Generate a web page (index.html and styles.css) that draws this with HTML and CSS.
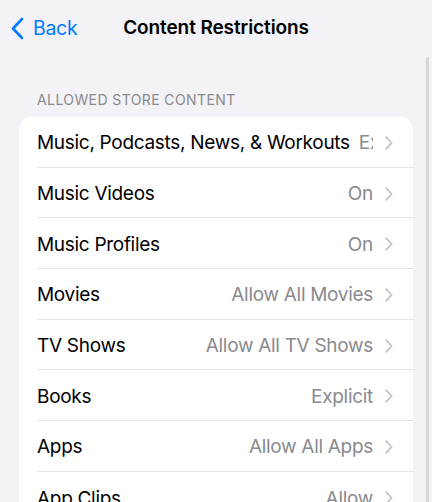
FILE: index.html
```html
<!DOCTYPE html>
<html lang="en">
<head>
<meta charset="utf-8">
<title>Content Restrictions</title>
<link rel="stylesheet" href="styles.css">
</head>
<body>
<div class="screen">
  <header class="nav">
    <a class="back" href="#">
      <svg class="back-icon" width="14" height="23" viewBox="0 0 14 23" aria-hidden="true">
        <path d="M12 2 L3 11.5 L12 21" fill="none" stroke="#007aff" stroke-width="2.6" stroke-linecap="round" stroke-linejoin="round"/>
      </svg>
      <span>Back</span>
    </a>
    <h1 class="title">Content Restrictions</h1>
    <div class="nav-spacer"></div>
  </header>

  <section class="group">
    <h2 class="group-header">ALLOWED STORE CONTENT</h2>
    <ul class="card">
      <li class="row"><div class="row-inner"><span class="label">Music, Podcasts, News, &amp; Workouts</span><span class="value">Explicit</span><svg class="chev" width="8" height="14" viewBox="0 0 8 14"><path d="M1.2 1.2 L6.6 7 L1.2 12.8" fill="none" stroke="#c4c4c7" stroke-width="1.8" stroke-linecap="round" stroke-linejoin="round"/></svg></div></li>
      <li class="row"><div class="row-inner"><span class="label">Music Videos</span><span class="value">On</span><svg class="chev" width="8" height="14" viewBox="0 0 8 14"><path d="M1.2 1.2 L6.6 7 L1.2 12.8" fill="none" stroke="#c4c4c7" stroke-width="1.8" stroke-linecap="round" stroke-linejoin="round"/></svg></div></li>
      <li class="row"><div class="row-inner"><span class="label">Music Profiles</span><span class="value">On</span><svg class="chev" width="8" height="14" viewBox="0 0 8 14"><path d="M1.2 1.2 L6.6 7 L1.2 12.8" fill="none" stroke="#c4c4c7" stroke-width="1.8" stroke-linecap="round" stroke-linejoin="round"/></svg></div></li>
      <li class="row"><div class="row-inner"><span class="label">Movies</span><span class="value">Allow All Movies</span><svg class="chev" width="8" height="14" viewBox="0 0 8 14"><path d="M1.2 1.2 L6.6 7 L1.2 12.8" fill="none" stroke="#c4c4c7" stroke-width="1.8" stroke-linecap="round" stroke-linejoin="round"/></svg></div></li>
      <li class="row"><div class="row-inner"><span class="label">TV Shows</span><span class="value">Allow All TV Shows</span><svg class="chev" width="8" height="14" viewBox="0 0 8 14"><path d="M1.2 1.2 L6.6 7 L1.2 12.8" fill="none" stroke="#c4c4c7" stroke-width="1.8" stroke-linecap="round" stroke-linejoin="round"/></svg></div></li>
      <li class="row"><div class="row-inner"><span class="label">Books</span><span class="value">Explicit</span><svg class="chev" width="8" height="14" viewBox="0 0 8 14"><path d="M1.2 1.2 L6.6 7 L1.2 12.8" fill="none" stroke="#c4c4c7" stroke-width="1.8" stroke-linecap="round" stroke-linejoin="round"/></svg></div></li>
      <li class="row"><div class="row-inner"><span class="label">Apps</span><span class="value">Allow All Apps</span><svg class="chev" width="8" height="14" viewBox="0 0 8 14"><path d="M1.2 1.2 L6.6 7 L1.2 12.8" fill="none" stroke="#c4c4c7" stroke-width="1.8" stroke-linecap="round" stroke-linejoin="round"/></svg></div></li>
      <li class="row"><div class="row-inner"><span class="label">App Clips</span><span class="value">Allow</span><svg class="chev" width="8" height="14" viewBox="0 0 8 14"><path d="M1.2 1.2 L6.6 7 L1.2 12.8" fill="none" stroke="#c4c4c7" stroke-width="1.8" stroke-linecap="round" stroke-linejoin="round"/></svg></div></li>
    </ul>
  </section>

  <div class="scroll-indicator"></div>
</div>
</body>
</html>
```

FILE: styles.css
```css
html, body {
  margin: 0;
  padding: 0;
  height: 100%;
  overflow: hidden;
}

body {
  background: #f2f2f7;
  font-family: Inter, "Noto Sans", "Liberation Sans", sans-serif;
  color: #000;
  -webkit-font-smoothing: antialiased;
}

.screen {
  position: relative;
  height: 502px;
  overflow: hidden;
}

.nav {
  display: grid;
  grid-template-columns: 1fr auto 1fr;
  align-items: center;
  height: 55px;
}

.back {
  display: flex;
  align-items: center;
  gap: 9px;
  padding-left: 10px;
  color: #007aff;
  text-decoration: none;
  font-size: 19.5px;
  letter-spacing: -0.3px;
}

.back-icon {
  display: block;
  margin-top: 1px;
}

.title {
  margin: 0;
  font-size: 19px;
  font-weight: 600;
  letter-spacing: -0.1px;
}

.group {
  padding: 35px 19px 0;
}

.group-header {
  margin: 0 0 8px;
  padding-left: 18px;
  font-size: 14px;
  font-weight: 400;
  color: #8a8a8e;
  letter-spacing: 0.4px;
  line-height: 19px;
}

.card {
  list-style: none;
  margin: 0;
  padding: 0;
  background: #fff;
  border-radius: 12px;
}

.row {
  padding-left: 18px;
}

.row-inner {
  display: flex;
  align-items: center;
  box-sizing: border-box;
  height: 50.7px;
  padding-top: 2px;
  padding-right: 20px;
  border-bottom: 1px solid #e4e4e8;
  font-size: 19px;
  letter-spacing: -0.3px;
}

.row:last-child .row-inner {
  border-bottom: none;
}

.label {
  flex-shrink: 0;
  white-space: nowrap;
}

.value {
  flex: 1;
  min-width: 0;
  margin-left: 9px;
  overflow: hidden;
  white-space: nowrap;
  text-align: right;
  color: #8a8a8e;
}

.chev {
  flex-shrink: 0;
  margin-left: 12px;
  display: block;
}

.scroll-indicator {
  position: absolute;
  top: 57px;
  right: 3px;
  bottom: -10px;
  width: 3px;
  border-radius: 2px;
  background: #d6d6da;
}
```
